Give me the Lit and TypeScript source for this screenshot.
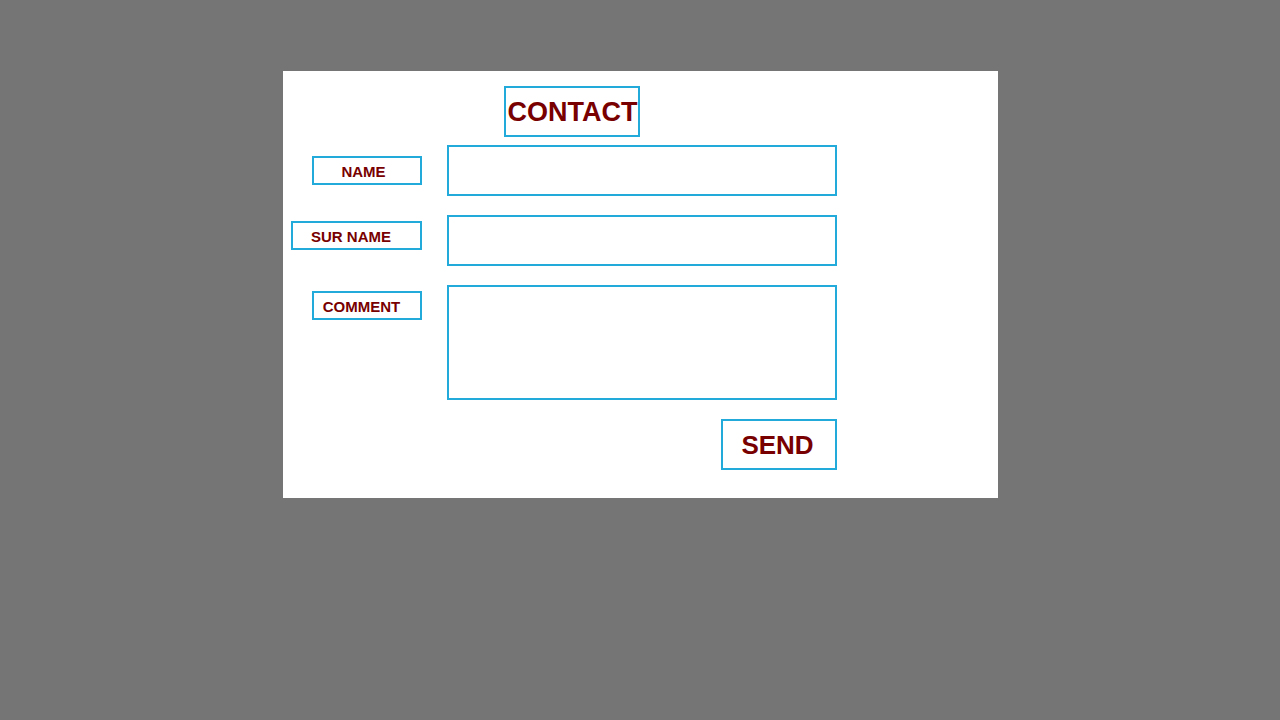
import { LitElement, html, css } from "lit";
import { customElement } from "lit/decorators.js";

@customElement("app-root")
export class AppRoot extends LitElement {
  static styles = css`
    :host {
      display: block;
      box-sizing: border-box;
      min-height: 100vh;
      padding: 71px 16px 16px;
      background: #757575;
      font-family: "Liberation Sans", Arial, sans-serif;
      font-weight: bold;
      color: #780000;
    }
    * {
      box-sizing: border-box;
    }
    .card {
      max-width: 715px;
      margin: 0 auto;
      padding: 15px 161px 28px 8px;
      background: #fff;
    }
    .boxed {
      border: 2px solid #22aadb;
      background: #fff;
      color: inherit;
      font-family: inherit;
      font-weight: bold;
      border-radius: 0;
      margin: 0;
    }
    .header {
      padding-left: 16px;
    }
    .title {
      display: flex;
      align-items: center;
      justify-content: center;
      width: 136px;
      height: 51px;
      margin: 0 auto 8px;
      padding: 2px 0 0 2px;
      font-size: 27px;
    }
    .form {
      display: grid;
      grid-template-columns: 131px minmax(0, 1fr);
      column-gap: 25px;
      row-gap: 19px;
    }
    .label {
      display: flex;
      align-items: center;
      justify-content: center;
      justify-self: end;
      align-self: start;
      width: 110px;
      height: 29px;
      margin-top: 6px;
      padding: 2px 10px 0 0;
      font-size: 15px;
      white-space: nowrap;
    }
    .label.first {
      margin-top: 11px;
      padding-right: 6px;
    }
    .label.wide {
      width: 100%;
    }
    .field {
      display: block;
      width: 100%;
      height: 51px;
      padding: 8px;
      font-size: 15px;
      outline: none;
    }
    .comment {
      height: 115px;
      resize: none;
    }
    .send {
      grid-column: 2;
      justify-self: end;
      width: 116px;
      height: 51px;
      padding: 2px 2px 0 0;
      font-size: 26px;
      cursor: pointer;
    }
  `;

  render() {
    return html`
      <main class="card">
        <header class="header"><h1 class="boxed title">CONTACT</h1></header>
        <form class="form" @submit=${(e: Event) => e.preventDefault()}>
          <label class="boxed label first" for="name">NAME</label>
          <input class="boxed field" id="name" name="name" type="text" />
          <label class="boxed label wide" for="surname">SUR NAME</label>
          <input class="boxed field" id="surname" name="surname" type="text" />
          <label class="boxed label" for="comment">COMMENT</label>
          <textarea class="boxed field comment" id="comment" name="comment"></textarea>
          <button class="boxed send" type="submit">SEND</button>
        </form>
      </main>
    `;
  }
}
